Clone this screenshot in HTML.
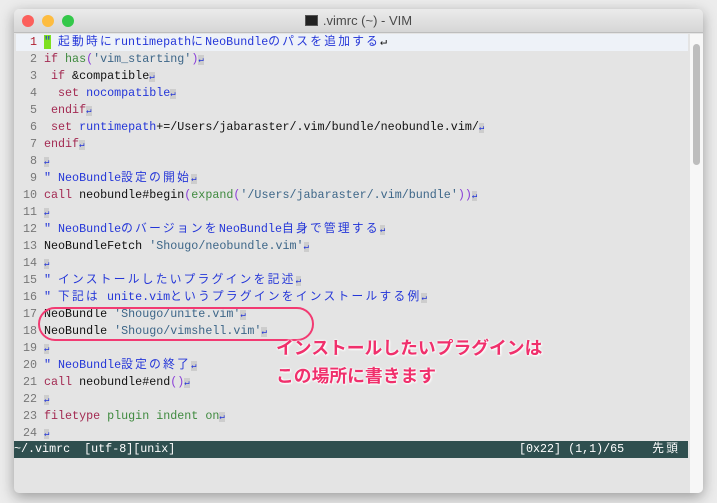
<!DOCTYPE html>
<html><head><meta charset="utf-8"><style>
*{margin:0;padding:0;box-sizing:border-box}
body{width:717px;height:503px;background:#ececec;position:relative;overflow:hidden;font-family:"Liberation Mono","Noto Sans CJK JP",monospace}
.win{position:absolute;left:14px;top:9px;width:689px;height:484px;background:#e4e4e4;border-radius:5px;box-shadow:0 4px 14px rgba(0,0,0,.35);overflow:hidden}
.tb{height:24px;background:linear-gradient(#ebebeb,#d6d6d6);border-bottom:1px solid #bdbdbd;position:relative}
.dot{position:absolute;top:6px;width:12px;height:12px;border-radius:50%}
.title{position:absolute;left:0;right:0;top:4px;text-align:center;font:13px "Liberation Sans",sans-serif;color:#4a4a4a}
.ic{display:inline-block;width:13px;height:11px;background:#222;border:1px solid #555;vertical-align:-1px;margin-right:5px}
.code{position:absolute;left:2px;top:25px;font-size:11.7px;line-height:17px}
.l{height:17px;white-space:pre;color:#111}
.n{display:inline-block;width:21px;text-align:right;color:#777;margin-right:7px}
.c{color:#2436d8}.k{color:#a32a52}.s{color:#3d6688}.f{color:#3f8a3f}.p{color:#8a3ed8}
.j{letter-spacing:2.3px}
.r{color:#2436d8;background:#cdcdcd;font-size:9px}
.sb{position:absolute;left:0;top:432px;width:674px;height:17px;background:#2f4f4f;color:#fff;font-size:11.7px;line-height:17px;white-space:pre}
.scr{position:absolute;left:676px;top:25px;width:13px;height:459px;background:#f7f7f7}
.th{position:absolute;left:679px;top:35px;width:7px;height:121px;background:#bdbdbd;border-radius:4px}
.oval{position:absolute;left:38px;top:307px;width:276px;height:34px;border:2px solid #f23a72;border-radius:17px}
.ann{position:absolute;left:276px;font:bold 17.8px "Noto Sans CJK JP",sans-serif;color:#f0306c;text-shadow:0 0 2px #fff,0 0 2px #fff,1px 1px 2px #fff}
</style></head><body>
<div class="win">
<div class="tb"><div class="dot" style="left:8px;background:#fc605c"></div><div class="dot" style="left:28px;background:#fdbc40"></div><div class="dot" style="left:48px;background:#34c84a"></div>
<div class="title"><span class="ic"></span>.vimrc (~) - VIM</div></div>
<div class="scr"></div><div class="th"></div>
<div class="code">
<div class="l" style="background:#eef2f8;width:672px"><span class="n" style="color:#b02030">1</span><span style="background:#7fe020;color:#2436d8">"</span><span class="c"> <i class="j" style="font-style:normal">起動時に</i>runtimepath<i class="j" style="font-style:normal">に</i>NeoBundle<i class="j" style="font-style:normal">のパスを追加する</i></span>↵</div>
<div class="l"><span class="n">2</span><span class="k">if</span> <span class="f">has</span><span class="p">(</span><span class="s">'vim_starting'</span><span class="p">)</span><span class="r">↵</span></div>
<div class="l"><span class="n">3</span> <span class="k">if</span> &amp;compatible<span class="r">↵</span></div>
<div class="l"><span class="n">4</span>  <span class="k">set</span> <span class="c">nocompatible</span><span class="r">↵</span></div>
<div class="l"><span class="n">5</span> <span class="k">endif</span><span class="r">↵</span></div>
<div class="l"><span class="n">6</span> <span class="k">set</span> <span class="c">runtimepath</span>+=/Users/jabaraster/.vim/bundle/neobundle.vim/<span class="r">↵</span></div>
<div class="l"><span class="n">7</span><span class="k">endif</span><span class="r">↵</span></div>
<div class="l"><span class="n">8</span><span class="r">↵</span></div>
<div class="l"><span class="n">9</span><span class="c">" NeoBundle<i class="j" style="font-style:normal">設定の開始</i></span><span class="r">↵</span></div>
<div class="l"><span class="n">10</span><span class="k">call</span> neobundle#begin<span class="p">(</span><span class="f">expand</span><span class="p">(</span><span class="s">'/Users/jabaraster/.vim/bundle'</span><span class="p">))</span><span class="r">↵</span></div>
<div class="l"><span class="n">11</span><span class="r">↵</span></div>
<div class="l"><span class="n">12</span><span class="c">" NeoBundle<i class="j" style="font-style:normal">のバージョンを</i>NeoBundle<i class="j" style="font-style:normal">自身で管理する</i></span><span class="r">↵</span></div>
<div class="l"><span class="n">13</span>NeoBundleFetch <span class="s">'Shougo/neobundle.vim'</span><span class="r">↵</span></div>
<div class="l"><span class="n">14</span><span class="r">↵</span></div>
<div class="l"><span class="n">15</span><span class="c">" <i class="j" style="font-style:normal">インストールしたいプラグインを記述</i></span><span class="r">↵</span></div>
<div class="l"><span class="n">16</span><span class="c">" <i class="j" style="font-style:normal">下記は</i> unite.vim<i class="j" style="font-style:normal">というプラグインをインストールする例</i></span><span class="r">↵</span></div>
<div class="l"><span class="n">17</span>NeoBundle <span class="s">'Shougo/unite.vim'</span><span class="r">↵</span></div>
<div class="l"><span class="n">18</span>NeoBundle <span class="s">'Shougo/vimshell.vim'</span><span class="r">↵</span></div>
<div class="l"><span class="n">19</span><span class="r">↵</span></div>
<div class="l"><span class="n">20</span><span class="c">" NeoBundle<i class="j" style="font-style:normal">設定の終了</i></span><span class="r">↵</span></div>
<div class="l"><span class="n">21</span><span class="k">call</span> neobundle#end<span class="p">()</span><span class="r">↵</span></div>
<div class="l"><span class="n">22</span><span class="r">↵</span></div>
<div class="l"><span class="n">23</span><span class="k">filetype</span> <span class="f">plugin</span> <span class="f">indent</span> <span class="f">on</span><span class="r">↵</span></div>
<div class="l"><span class="n">24</span><span class="r">↵</span></div>
</div>
<div class="sb">~/.vimrc  [utf-8][unix]                                                 [0x22] (1,1)/65    <i class="j" style="font-style:normal">先頭</i></div>
</div>
<div class="oval"></div>
<div class="ann" style="top:334px">インストールしたいプラグインは</div>
<div class="ann" style="top:362px">この場所に書きます</div>
</body></html>
